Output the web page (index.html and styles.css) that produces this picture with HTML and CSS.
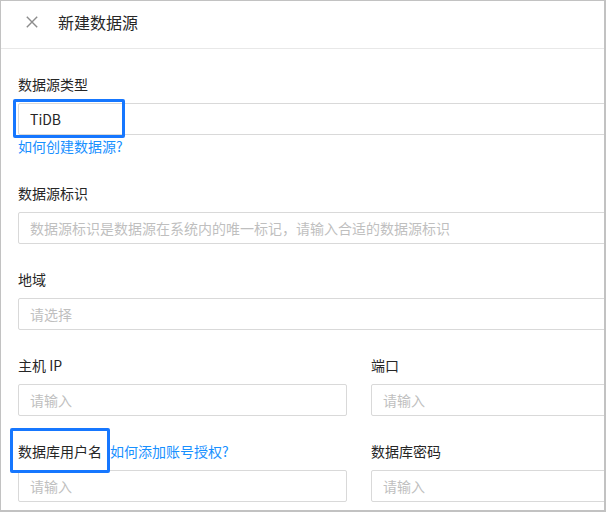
FILE: index.html
```html
<!DOCTYPE html>
<html lang="zh-CN">
<head>
<meta charset="utf-8">
<title>新建数据源</title>
<link rel="stylesheet" href="styles.css">
</head>
<body>
<div class="frame">
  <header class="header">
    <svg class="close" width="12" height="12" viewBox="0 0 12 12" aria-hidden="true">
      <path d="M0.8 0.8 L11.2 11.2 M11.2 0.8 L0.8 11.2" stroke="#8c8c8c" stroke-width="1.4" fill="none"/>
    </svg>
    <span class="title">新建数据源</span>
  </header>
  <div class="form">
    <div class="item item-link">
      <div class="label">数据源类型</div>
      <div class="input"><span class="value">TiDB</span></div>
      <a class="link help">如何创建数据源?</a>
    </div>
    <div class="item">
      <div class="label">数据源标识</div>
      <div class="input"><span class="ph">数据源标识是数据源在系统内的唯一标记，请输入合适的数据源标识</span></div>
    </div>
    <div class="item">
      <div class="label">地域</div>
      <div class="input"><span class="ph">请选择</span></div>
    </div>
    <div class="row">
      <div class="item">
        <div class="label">主机 IP</div>
        <div class="input"><span class="ph">请输入</span></div>
      </div>
      <div class="item">
        <div class="label">端口</div>
        <div class="input"><span class="ph">请输入</span></div>
      </div>
    </div>
    <div class="row">
      <div class="item">
        <div class="label">数据库用户名<a class="link inline">如何添加账号授权?</a></div>
        <div class="input"><span class="ph">请输入</span></div>
      </div>
      <div class="item">
        <div class="label">数据库密码</div>
        <div class="input"><span class="ph">请输入</span></div>
      </div>
    </div>
  </div>
  <div class="mark mark-type"></div>
  <div class="mark mark-user"></div>
</div>
</body>
</html>
```

FILE: styles.css
```css
* { box-sizing: border-box; }
html, body { margin: 0; padding: 0; background: #fff; }
body {
  font-family: "Noto Sans CJK SC", "Microsoft YaHei", sans-serif;
  font-size: 14px;
  color: #333;
}
.frame {
  position: relative;
  width: 606px;
  height: 512px;
  border: 1px solid #c2c2c2;
  border-right-width: 2px;
  border-bottom-width: 2px;
  overflow: hidden;
  background: #fff;
}
.header {
  display: flex;
  align-items: center;
  height: 48px;
  padding: 9px 0 14px 25px;
  border-bottom: 1px solid #e8e8e8;
}
.close { display: block; flex: none; }
.title {
  margin-left: 20px;
  font-size: 16px;
  line-height: 24px;
  color: #262626;
}
.form {
  width: 682px;
  padding: 24px 0 0 17px;
  box-sizing: content-box;
}
.item { margin-bottom: 24px; }
.item-link { margin-bottom: 25px; }
.label {
  line-height: 22px;
  height: 22px;
  margin-bottom: 8px;
  color: #262626;
  white-space: nowrap;
}
.input {
  height: 32px;
  border: 1px solid #d9d9d9;
  border-radius: 2px;
  padding: 0 11px;
  line-height: 30px;
  white-space: nowrap;
  overflow: hidden;
}
.value { color: #262626; }
.ph { color: #bfbfbf; }
.link { color: #1890ff; text-decoration: none; }
.help { display: block; line-height: 22px; }
.inline { margin-left: 8px; }
.row {
  display: grid;
  grid-template-columns: 329px 329px;
  column-gap: 24px;
}
.mark {
  position: absolute;
  border: 3px solid #1677ff;
  border-radius: 2px;
}
.mark-type { left: 12px; top: 98px; width: 112px; height: 39px; }
.mark-user { left: 9px; top: 427px; width: 100px; height: 45px; }
```
